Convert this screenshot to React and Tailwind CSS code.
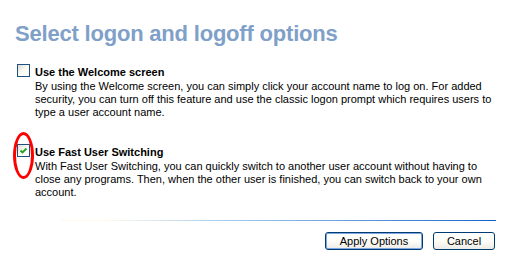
function XpCheckbox({ checked }) {
  return (
    <div className="w-[13px] h-[13px] border border-[#1c5180] bg-gradient-to-br from-[#dcdcd7] via-[#fbfbf6] to-white flex items-center justify-center shrink-0">
      {checked && (
        <svg width="9" height="9" viewBox="0 0 9 9">
          <path d="M1.5 4.5 L3.5 6.5 L7.5 2.5" stroke="#21a121" strokeWidth="1.8" fill="none" />
        </svg>
      )}
    </div>
  )
}

function Option({ checked, label, lines }) {
  return (
    <div className="flex items-start gap-[5px] pl-[17px]">
      <XpCheckbox checked={checked} />
      <div className="mt-[2px] text-[11px] leading-[13px] text-black">
        <div className="font-bold">{label}</div>
        <div className="mt-[1px]">
          {lines.map((line) => (
            <div key={line} className="whitespace-nowrap">{line}</div>
          ))}
        </div>
      </div>
    </div>
  )
}

function XpButton({ children, isDefault }) {
  return (
    <button
      className={
        'h-[18px] rounded-[3px] border bg-gradient-to-b from-white via-[#fefdf8] to-[#ecebe6] text-[11px] leading-none text-black ' +
        (isDefault
          ? 'w-[98px] border-[#003c74] shadow-[inset_0_0_0_1px_#7ea6e0]'
          : 'w-[62px] border-[#003c74]')
      }
    >
      {children}
    </button>
  )
}

export default function App() {
  return (
    <div className="w-[510px] h-[273px] bg-white relative font-['Liberation_Sans',Arial,sans-serif] overflow-hidden">
      <h1 className="pt-[21px] pl-[15px] text-[22px] leading-[26px] font-bold tracking-[-0.2px] text-[#7fa0c8]">
        Select logon and logoff options
      </h1>

      <div className="mt-[17px]">
        <Option
          label="Use the Welcome screen"
          lines={[
            'By using the Welcome screen, you can simply click your account name to log on. For added',
            'security, you can turn off this feature and use the classic logon prompt which requires users to',
            'type a user account name.',
          ]}
        />
      </div>

      <div className="mt-[25px]">
        <Option
          checked
          label="Use Fast User Switching"
          lines={[
            'With Fast User Switching, you can quickly switch to another user account without having to',
            'close any programs. Then, when the other user is finished, you can switch back to your own',
            'account.',
          ]}
        />
      </div>

      <div className="mt-[21px] ml-[61px] w-[435px] h-px bg-gradient-to-r from-[#fffbe8] from-10% via-[#9ec8ee] via-40% to-[#0a62c8]" />

      <div className="mt-[11px] flex justify-end gap-[10px] pr-[15px]">
        <XpButton isDefault>Apply Options</XpButton>
        <XpButton>Cancel</XpButton>
      </div>

      <div className="absolute left-[13px] top-[132px] w-[21px] h-[47px] rounded-[50%] border-[3px] border-[#ff0000]" />
    </div>
  )
}
